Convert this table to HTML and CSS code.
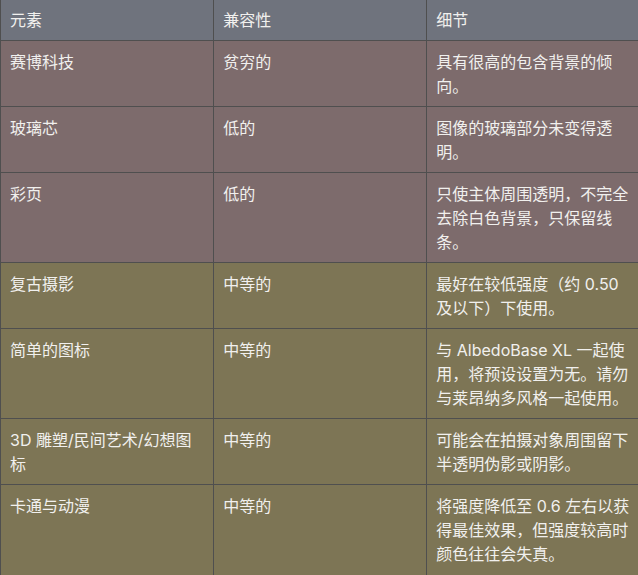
FILE: index.html
```html
<!DOCTYPE html>
<html lang="zh-CN">
<head>
<meta charset="utf-8">
<title>兼容性表</title>
<link rel="stylesheet" href="styles.css">
</head>
<body>
<table class="compat">
  <colgroup><col class="c"><col class="c"><col class="c"></colgroup>
  <thead>
    <tr><th>元素</th><th>兼容性</th><th>细节</th></tr>
  </thead>
  <tbody>
    <tr class="poor"><td>赛博科技</td><td>贫穷的</td><td>具有很高的包含背景的倾向。</td></tr>
    <tr class="poor"><td>玻璃芯</td><td>低的</td><td>图像的玻璃部分未变得透明。</td></tr>
    <tr class="poor"><td>彩页</td><td>低的</td><td>只使主体周围透明，不完全去除白色背景，只保留线条。</td></tr>
    <tr class="mid"><td>复古摄影</td><td>中等的</td><td>最好在较低强度（约 0.50 及以下）下使用。</td></tr>
    <tr class="mid"><td>简单的图标</td><td>中等的</td><td>与 AlbedoBase XL 一起使用，将预设设置为无。请勿与莱昂纳多风格一起使用。</td></tr>
    <tr class="mid"><td>3D 雕塑/民间艺术/幻想图标</td><td>中等的</td><td>可能会在拍摄对象周围留下半透明伪影或阴影。</td></tr>
    <tr class="mid"><td>卡通与动漫</td><td>中等的</td><td>将强度降低至 0.6 左右以获得最佳效果，但强度较高时颜色往往会失真。</td></tr>
  </tbody>
</table>
</body>
</html>
```

FILE: styles.css
```css
html, body {
  margin: 0;
  padding: 0;
  overflow: hidden;
  background: #7d7555;
}
.compat {
  width: 640px;
  table-layout: fixed;
  border-collapse: collapse;
  font-family: "Inter", "Noto Sans CJK SC", sans-serif;
  font-size: 16px;
  line-height: 24px;
  color: #f1f0ee;
}
.compat .c { width: 213px; }
.compat th, .compat td {
  border: 1px solid #4f4f4f;
  text-align: left;
  vertical-align: top;
  padding: 9px 9px 8px 9px;
  font-weight: 400;
}
.compat th {
  background: #6f737d;
  padding: 8px 9px 8px 9px;
  border-top: none;
}
.compat .poor td { background: #7d6b6c; }
.compat .mid td { background: #7d7555; }
.compat td:last-child, .compat th:last-child { border-right: none; }
.compat tbody tr:last-child td { border-bottom: none; padding-bottom: 10px; }
```
